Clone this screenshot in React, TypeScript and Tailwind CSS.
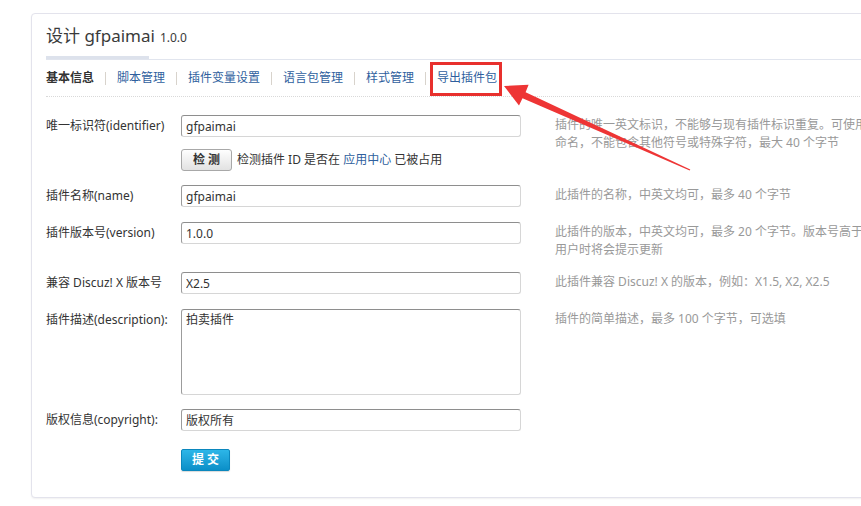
import React from "react";

function Row({
  label,
  help,
  children,
  className = "",
}: {
  label: React.ReactNode;
  help?: React.ReactNode;
  children: React.ReactNode;
  className?: string;
}) {
  return (
    <div className={"flex items-start " + className}>
      <div className="w-[135px] shrink-0 leading-[22px] text-[#333]">{label}</div>
      <div className="w-[340px] shrink-0">{children}</div>
      {help ? (
        <div className="ml-[34px] pt-[1px] leading-[18px] text-[#999] whitespace-nowrap">{help}</div>
      ) : null}
    </div>
  );
}

const inputCls =
  "block h-[22px] w-[340px] rounded-[3px] border border-t-[#8e8e8e] border-l-[#9c9c9c] border-r-[#d6d6d6] border-b-[#d6d6d6] bg-white px-[4px] text-[12px] leading-[20px] text-[#333] outline-none";

export default function App() {
  const tabs = ["脚本管理", "插件变量设置", "语言包管理", "样式管理", "导出插件包"];
  return (
    <div className="relative h-[506px] w-[861px] overflow-hidden bg-white font-['Noto_Sans','Noto_Sans_CJK_SC',sans-serif] text-[12px] text-[#333]">
      <div className="ml-[31px] mt-[13px] w-[900px] rounded-[4px] border border-[#e3e3ec] bg-white pb-[26px] pl-[14px] pt-[10px] shadow-[0_1px_2px_rgba(0,0,0,0.06)]">
        {/* Title */}
        <div className="flex items-baseline leading-[24px] text-[#3a3a3a]">
          <span className="text-[17px]">设计 gfpaimai</span>
          <span className="ml-[5px] text-[12px]">1.0.0</span>
        </div>
        <div className="mt-[6px] h-[4px] border-b border-[#e1e5ee]">
          <div className="h-[3px] w-[103px] bg-[#dde2ec]" />
        </div>

        {/* Tabs */}
        <div className="mt-[8px] flex items-center border-b border-dotted border-[#d9d9d9] pb-[8px] leading-[20px]">
          <span className="font-bold text-[#333]">基本信息</span>
          {tabs.map((t) => (
            <React.Fragment key={t}>
              <span className="mx-[11px] h-[13px] w-px bg-[#d8d3cc]" />
              <span className="text-[#2f5f9e]">{t}</span>
            </React.Fragment>
          ))}
        </div>

        {/* Form */}
        <div className="mt-[18px] flex flex-col">
          <Row
            label="唯一标识符(identifier)"
            help={
              <>
                插件的唯一英文标识，不能够与现有插件标识重复。可使用字母、数字、下划线
                <br />
                命名，不能包含其他符号或特殊字符，最大 40 个字节
              </>
            }
          >
            <input className={inputCls} defaultValue="gfpaimai" />
            <div className="mt-[12px] flex items-center">
              <button className="h-[22px] w-[51px] rounded-[3px] border border-[#a8a8a8] bg-gradient-to-b from-[#fefefe] to-[#e2e2e2] text-[12px] font-bold leading-[20px] text-[#333]">
                检 测
              </button>
              <span className="ml-[5px] leading-[20px]">
                检测插件 ID 是否在 <span className="text-[#2f5f9e]">应用中心</span> 已被占用
              </span>
            </div>
          </Row>

          <Row className="mt-[14px]" label="插件名称(name)" help="此插件的名称，中英文均可，最多 40 个字节">
            <input className={inputCls} defaultValue="gfpaimai" />
          </Row>

          <Row
            className="mt-[15px]"
            label="插件版本号(version)"
            help={
              <>
                此插件的版本，中英文均可，最多 20 个字节。版本号高于每个已安装本插件站点的版本时，
                <br />
                用户时将会提示更新
              </>
            }
          >
            <input className={inputCls} defaultValue="1.0.0" />
          </Row>

          <Row className="mt-[13px]" label="兼容 Discuz! X 版本号" help="此插件兼容 Discuz! X 的版本，例如：X1.5, X2, X2.5">
            <input className={inputCls} defaultValue="X2.5" />
          </Row>

          <Row className="mt-[15px]" label="插件描述(description):" help="插件的简单描述，最多 100 个字节，可选填">
            <textarea
              className="block h-[86px] w-[340px] resize-none rounded-[3px] border border-t-[#8e8e8e] border-l-[#9c9c9c] border-r-[#d6d6d6] border-b-[#d6d6d6] bg-white px-[4px] py-[1px] text-[12px] leading-[18px] text-[#333] outline-none"
              defaultValue="拍卖插件"
            />
          </Row>

          <Row className="mt-[14px]" label="版权信息(copyright):">
            <input className={inputCls} defaultValue="版权所有" />
          </Row>

          <Row className="mt-[18px]" label="">
            <button className="h-[22px] w-[49px] rounded-[2px] border border-[#0b87bd] bg-gradient-to-b from-[#2cb6e8] to-[#0a8fc8] text-[12px] font-bold leading-[20px] text-white shadow-[0_1px_1px_rgba(0,0,0,0.15)]">
              提 交
            </button>
          </Row>
        </div>
      </div>

      {/* Annotation overlay */}
      <svg className="pointer-events-none absolute left-0 top-0" width="861" height="506" viewBox="0 0 861 506">
        <rect x="431.5" y="63.5" width="69" height="31" fill="none" stroke="#e8302d" strokeWidth="3" />
        <polygon
          points="504,86 528.6,84.8 525.6,92.3 690.3,169.4 689.7,170.6 522.5,98.2 519,105.4"
          fill="#ee3535"
        />
      </svg>
    </div>
  );
}
